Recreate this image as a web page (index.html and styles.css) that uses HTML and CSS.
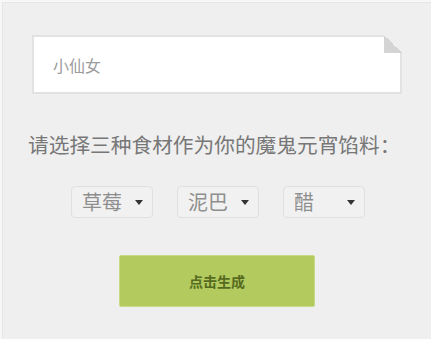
FILE: index.html
```html
<!DOCTYPE html>
<html lang="zh-CN">
  <head>
    <meta charset="UTF-8" />
    <meta name="viewport" content="width=device-width, initial-scale=1.0" />
    <title>魔鬼元宵</title>
    <link rel="stylesheet" href="styles.css">
  </head>
  <body>
    <div class="page">
      <div class="name-box">
        <span class="name-text">小仙女</span>
      </div>

      <div class="prompt">请选择三种食材作为你的魔鬼元宵馅料：</div>

      <div class="picks">
        <div class="pick">
          <span class="pick-text">草莓</span>
          <span class="pick-arrow"></span>
        </div>
        <div class="pick">
          <span class="pick-text">泥巴</span>
          <span class="pick-arrow"></span>
        </div>
        <div class="pick">
          <span class="pick-text">醋</span>
          <span class="pick-arrow"></span>
        </div>
      </div>

      <button class="make-btn">点击生成</button>
    </div>
  </body>
</html>
```

FILE: styles.css
```css
* {
  margin: 0;
  padding: 0;
  box-sizing: border-box;
}

body {
  background: #f7f7f7;
  font-family: "Noto Sans CJK SC", "Noto Sans", sans-serif;
  overflow: hidden;
}

.page {
  margin: 2px 0 0 2px;
  border-top: 1px solid #e6e6e6;
  border-left: 1px solid #e6e6e6;
  background: #efefef;
  min-height: 337px;
  padding-top: 32px;
}

.name-box {
  position: relative;
  margin: 0 29px;
  height: 59px;
  background: #fff;
  border: 2px solid #e2e2e2;
  padding-left: 19px;
  display: flex;
  align-items: center;
}

.name-box::after {
  content: "";
  position: absolute;
  top: -2px;
  right: -2px;
  width: 18px;
  height: 18px;
  background: linear-gradient(45deg, #d4d4d4 50%, #efefef 50%);
}

.name-text {
  font-size: 16px;
  color: #9c9c9c;
}

.prompt {
  margin-top: 36px;
  padding-left: 25px;
  font-size: 20.7px;
  line-height: 29px;
  color: #777;
  white-space: nowrap;
}

.picks {
  display: flex;
  gap: 24px;
  margin-top: 27px;
  padding-left: 68px;
}

.pick {
  width: 82px;
  height: 32px;
  border: 1px solid #e0e0e0;
  border-radius: 4px;
  background: #f1f1f1;
  display: flex;
  align-items: center;
  justify-content: space-between;
  padding: 0 9px 0 10px;
}

.pick-text {
  font-size: 20px;
  line-height: 1;
  color: #8e8e8e;
}

.pick-arrow {
  width: 0;
  height: 0;
  border-left: 4px solid transparent;
  border-right: 4px solid transparent;
  border-top: 5px solid #333;
}

.make-btn {
  display: block;
  margin: 37px 0 0 116px;
  width: 196px;
  height: 52px;
  background: #b2ca5e;
  border: 1px solid #c7db87;
  border-radius: 2px;
  font-family: "Noto Sans CJK SC", sans-serif;
  font-size: 14px;
  font-weight: 700;
  color: #566b1f;
  cursor: pointer;
}
```
